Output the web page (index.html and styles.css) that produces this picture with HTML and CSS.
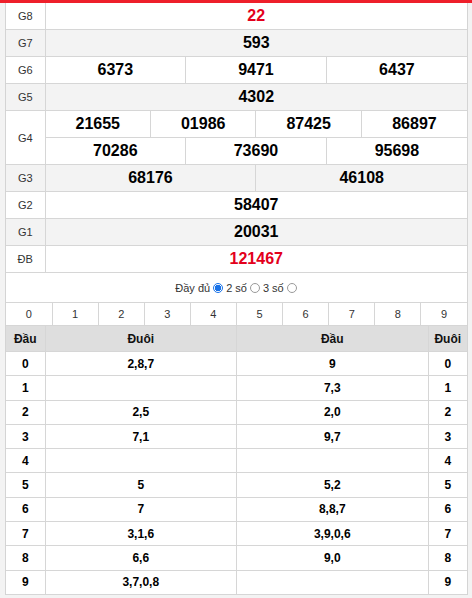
FILE: index.html
```html
<!DOCTYPE html>
<html lang="vi">
<head>
<meta charset="utf-8">
<title>KQXS</title>
<link rel="stylesheet" href="styles.css">
</head>
<body>
<div class="topbar"></div>
<div class="wrap">
  <table class="prize">
    <colgroup>
      <col class="c-label">
      <col><col><col><col><col><col><col><col><col><col><col><col>
    </colgroup>
    <tbody>
      <tr><td class="lbl">G8</td><td colspan="12" class="num red">22</td></tr>
      <tr class="alt"><td class="lbl">G7</td><td colspan="12" class="num">593</td></tr>
      <tr><td class="lbl">G6</td><td colspan="4" class="num">6373</td><td colspan="4" class="num">9471</td><td colspan="4" class="num">6437</td></tr>
      <tr class="alt"><td class="lbl">G5</td><td colspan="12" class="num">4302</td></tr>
      <tr><td class="lbl" rowspan="2">G4</td><td colspan="3" class="num">21655</td><td colspan="3" class="num">01986</td><td colspan="3" class="num">87425</td><td colspan="3" class="num">86897</td></tr>
      <tr><td colspan="4" class="num">70286</td><td colspan="4" class="num">73690</td><td colspan="4" class="num">95698</td></tr>
      <tr class="alt"><td class="lbl">G3</td><td colspan="6" class="num">68176</td><td colspan="6" class="num">46108</td></tr>
      <tr><td class="lbl">G2</td><td colspan="12" class="num">58407</td></tr>
      <tr class="alt"><td class="lbl">G1</td><td colspan="12" class="num">20031</td></tr>
      <tr><td class="lbl">ĐB</td><td colspan="12" class="num red">121467</td></tr>
    </tbody>
  </table>

  <div class="options">
    <span>Đầy đủ</span><span class="radio checked"></span><span>2 số</span><span class="radio"></span><span>3 số</span><span class="radio"></span>
  </div>

  <table class="digits">
    <tr><td>0</td><td>1</td><td>2</td><td>3</td><td>4</td><td>5</td><td>6</td><td>7</td><td>8</td><td>9</td></tr>
  </table>

  <table class="loto">
    <colgroup>
      <col class="c-side"><col><col><col class="c-side">
    </colgroup>
    <thead>
      <tr><th>Đầu</th><th>Đuôi</th><th>Đầu</th><th>Đuôi</th></tr>
    </thead>
    <tbody>
      <tr><td>0</td><td>2,8,7</td><td>9</td><td>0</td></tr>
      <tr><td>1</td><td></td><td>7,3</td><td>1</td></tr>
      <tr><td>2</td><td>2,5</td><td>2,0</td><td>2</td></tr>
      <tr><td>3</td><td>7,1</td><td>9,7</td><td>3</td></tr>
      <tr><td>4</td><td></td><td></td><td>4</td></tr>
      <tr><td>5</td><td>5</td><td>5,2</td><td>5</td></tr>
      <tr><td>6</td><td>7</td><td>8,8,7</td><td>6</td></tr>
      <tr><td>7</td><td>3,1,6</td><td>3,9,0,6</td><td>7</td></tr>
      <tr><td>8</td><td>6,6</td><td>9,0</td><td>8</td></tr>
      <tr><td>9</td><td>3,7,0,8</td><td></td><td>9</td></tr>
    </tbody>
  </table>
</div>
</body>
</html>
```
FILE: styles.css
```css
html, body {
  margin: 0;
  padding: 0;
}
body {
  background: #f3f3f3;
  font-family: "Liberation Sans", Arial, sans-serif;
  color: #000;
}
.topbar {
  height: 3px;
  background: #ee1f2a;
}
.wrap {
  margin-left: 5px;
  width: 461px;
  background: #fff;
  border-left: 1px solid #d4d4d4;
  border-right: 1px solid #d4d4d4;
}
table {
  width: 100%;
  border-collapse: collapse;
  table-layout: fixed;
}
td, th {
  border: 1px solid #d6d6d6;
  padding: 0;
  text-align: center;
}
.prize {
  border-top-style: hidden;
  border-left-style: hidden;
  border-right-style: hidden;
}
.prize .c-label {
  width: 39px;
}
.prize td {
  height: 26px;
}
.prize .lbl {
  font-size: 11px;
  color: #333;
}
.prize .num {
  font-size: 16px;
  font-weight: bold;
  color: #000;
}
.prize .red {
  color: #e3001b;
}
.prize .alt td {
  background: #f3f3f3;
}
.options {
  height: 29px;
  display: flex;
  align-items: center;
  justify-content: center;
  gap: 2px;
  font-size: 11px;
  color: #333;
  border-bottom: 1px solid #d6d6d6;
}
.radio {
  width: 8px;
  height: 8px;
  border: 1px solid #9a9a9a;
  border-radius: 50%;
  background: #fff;
  box-sizing: content-box;
  margin: 0 1px;
}
.radio.checked {
  border-color: #1a73e8;
  background: radial-gradient(circle, #1a73e8 0 3px, #fff 3.5px);
}
.digits {
  border-left-style: hidden;
  border-right-style: hidden;
  border-top-style: hidden;
}
.digits td {
  height: 22px;
  font-size: 11px;
  color: #333;
}
.loto {
  border-left-style: hidden;
  border-right-style: hidden;
  border-top-style: hidden;
}
.loto .c-side {
  width: 39px;
}
.loto th {
  height: 25px;
  background: #dedede;
  font-size: 12px;
  font-weight: bold;
  color: #111;
}
.loto td {
  height: 23.3px;
  font-size: 12px;
  font-weight: bold;
  color: #000;
}
```
